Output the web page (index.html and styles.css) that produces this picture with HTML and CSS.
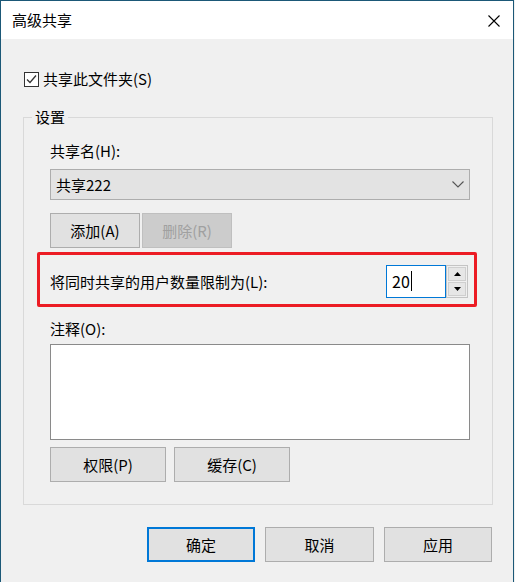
FILE: index.html
```html
<!DOCTYPE html>
<html lang="zh-CN">
<head>
<meta charset="utf-8">
<title>高级共享</title>
<link rel="stylesheet" href="styles.css">
</head>
<body>
<div class="window">
  <div class="titlebar">
    <span class="title">高级共享</span>
    <svg class="close" width="12" height="12" viewBox="0 0 12 12"><path d="M0.5 0.5 L11.5 11.5 M11.5 0.5 L0.5 11.5" stroke="#000" stroke-width="1.1" fill="none"/></svg>
  </div>
  <div class="client">
    <div class="check">
      <span class="box"><svg width="13" height="13" viewBox="0 0 13 13"><path d="M2 6.5 L5 9.5 L11 2.5" stroke="#333" stroke-width="1.3" fill="none"/></svg></span>
      <span>共享此文件夹(S)</span>
    </div>
    <fieldset class="group">
      <legend>设置</legend>
      <div class="gbody">
        <div class="lbl first">共享名(H):</div>
        <div class="combo">
          <span>共享222</span>
          <svg width="12" height="7" viewBox="0 0 12 7"><path d="M0.5 0.5 L6 6 L11.5 0.5" stroke="#555" stroke-width="1.1" fill="none"/></svg>
        </div>
        <div class="btnrow top">
          <button class="btn w90">添加(A)</button>
          <button class="btn w90" disabled>删除(R)</button>
        </div>
        <div class="limit">
          <span>将同时共享的用户数量限制为(L):</span>
          <div class="spin">
            <div class="spin-input">20<span class="caret"></span></div>
            <div class="spin-btns">
              <span class="sb"><svg width="7" height="4" viewBox="0 0 7 4"><path d="M0 4 L3.5 0 L7 4 Z" fill="#000"/></svg></span>
              <span class="sb"><svg width="7" height="4" viewBox="0 0 7 4"><path d="M0 0 L3.5 4 L7 0 Z" fill="#000"/></svg></span>
            </div>
          </div>
        </div>
        <div class="lbl note">注释(O):</div>
        <div class="textarea"></div>
        <div class="btnrow bottom">
          <button class="btn w116">权限(P)</button>
          <button class="btn w116">缓存(C)</button>
        </div>
      </div>
    </fieldset>
    <div class="footer">
      <button class="btn ok">确定</button>
      <button class="btn w109">取消</button>
      <button class="btn w108">应用</button>
    </div>
  </div>
</div>
</body>
</html>
```

FILE: styles.css
```css
* { box-sizing: border-box; }
html, body { margin: 0; padding: 0; background: #f0f0f0; }
body {
  font-family: "Noto Sans CJK SC", "Noto Sans", sans-serif;
  font-size: 15px;
  color: #000;
  width: 515px;
  height: 582px;
  overflow: hidden;
}
.window {
  width: 514px;
  height: 582px;
  border-top: 1px solid #1b5877;
  border-left: 1px solid #1b5877;
  border-right: 1px solid #1b5877;
  background: #f0f0f0;
}
.titlebar {
  height: 38px;
  background: #fff;
  display: flex;
  align-items: center;
  padding-left: 11px;
  padding-right: 13px;
  justify-content: space-between;
}
.title { font-size: 15px; line-height: 20px; }
.close { display: block; margin-top: 1px; }
.client { padding-top: 30px; }
.check {
  display: flex;
  align-items: center;
  height: 20px;
  padding-left: 23px;
  line-height: 20px;
}
.box {
  width: 15px;
  height: 15px;
  border: 1px solid #333;
  background: #fff;
  display: flex;
  align-items: center;
  justify-content: center;
  margin-right: 4px;
}
.box svg { display: block; }
.group {
  margin: 18px 0 0 22px;
  width: 470px;
  padding: 0 0 22px 0;
  border: 1px solid #d9d9d9;
  min-width: 0;
}
.group legend {
  margin-left: 8px;
  padding: 0 3px;
  line-height: 20px;
  font-size: 15px;
}
.gbody { padding-left: 26px; padding-right: 21px; }
.lbl { line-height: 20px; }
.lbl.first { margin-top: 14px; }
.combo {
  margin-top: 8px;
  height: 31px;
  width: 420px;
  background: #e3e3e3;
  border: 1px solid #adadad;
  display: flex;
  align-items: center;
  justify-content: space-between;
  padding: 0 5px 0 5px;
}
.combo svg { display: block; }
.btnrow { display: flex; gap: 2px; }
.btnrow.top { margin-top: 13px; }
.btnrow.bottom { margin-top: 7px; gap: 8px; }
.btn {
  font-family: inherit;
  font-size: 15px;
  color: #000;
  height: 35px;
  background: #e1e1e1;
  border: 1px solid #adadad;
  padding: 0;
  margin: 0;
  border-radius: 0;
}
.btn:disabled { background: #cccccc; border-color: #bfbfbf; color: #a0a0a0; }
.w90 { width: 90px; }
.w116 { width: 116px; }
.w108 { width: 108px; }
.w109 { width: 109px; }
.ok { width: 108px; border: 2px solid #0078d7; }
.limit {
  margin: 4px 0 0 -13px;
  width: 440px;
  height: 55px;
  border: 3px solid #ec1c24;
  border-radius: 2px;
  display: flex;
  align-items: center;
  justify-content: space-between;
  padding: 3px 6px 0 10px;
}
.spin { display: flex; height: 33px; }
.spin-input {
  width: 60px;
  height: 33px;
  background: #fff;
  border: 1px solid #0078d7;
  display: flex;
  align-items: center;
  padding-left: 5px;
  font-size: 16px;
}
.caret {
  display: inline-block;
  width: 1px;
  height: 20px;
  background: #000;
  margin-left: 1px;
}
.spin-btns {
  width: 22px;
  height: 33px;
  border: 1px solid #c4c4c4;
  background: #f0f0f0;
  display: flex;
  flex-direction: column;
  gap: 1px;
  padding: 1px;
}
.sb {
  flex: 1;
  background: #e6e6e6;
  border: 1px solid #cfcfcf;
  display: flex;
  align-items: center;
  justify-content: center;
}
.sb svg { display: block; }
.lbl.note { margin-top: 12px; }
.textarea {
  margin-top: 5px;
  width: 420px;
  height: 96px;
  background: #fff;
  border: 1px solid #8a8a8a;
}
.footer {
  display: flex;
  justify-content: flex-end;
  gap: 10px;
  padding-right: 21px;
  margin-top: 22px;
}
```
